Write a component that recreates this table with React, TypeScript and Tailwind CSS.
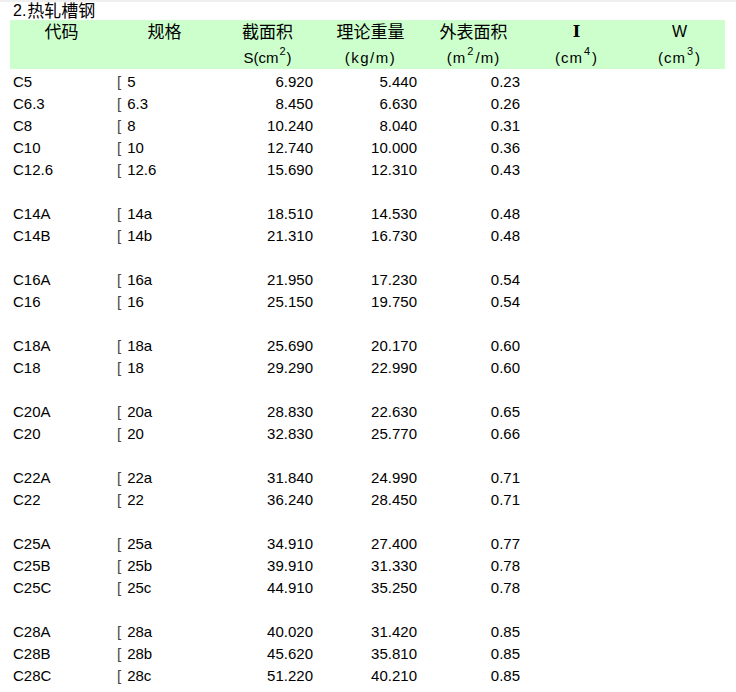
import React from "react";

type Row = [string, string, string, string, string] | null;

const rows: Row[] = [
  ["C5", "5", "6.920", "5.440", "0.23"],
  ["C6.3", "6.3", "8.450", "6.630", "0.26"],
  ["C8", "8", "10.240", "8.040", "0.31"],
  ["C10", "10", "12.740", "10.000", "0.36"],
  ["C12.6", "12.6", "15.690", "12.310", "0.43"],
  null,
  ["C14A", "14a", "18.510", "14.530", "0.48"],
  ["C14B", "14b", "21.310", "16.730", "0.48"],
  null,
  ["C16A", "16a", "21.950", "17.230", "0.54"],
  ["C16", "16", "25.150", "19.750", "0.54"],
  null,
  ["C18A", "18a", "25.690", "20.170", "0.60"],
  ["C18", "18", "29.290", "22.990", "0.60"],
  null,
  ["C20A", "20a", "28.830", "22.630", "0.65"],
  ["C20", "20", "32.830", "25.770", "0.66"],
  null,
  ["C22A", "22a", "31.840", "24.990", "0.71"],
  ["C22", "22", "36.240", "28.450", "0.71"],
  null,
  ["C25A", "25a", "34.910", "27.400", "0.77"],
  ["C25B", "25b", "39.910", "31.330", "0.78"],
  ["C25C", "25c", "44.910", "35.250", "0.78"],
  null,
  ["C28A", "28a", "40.020", "31.420", "0.85"],
  ["C28B", "28b", "45.620", "35.810", "0.85"],
  ["C28C", "28c", "51.220", "40.210", "0.85"],
];

const grid = "grid grid-cols-[103px_103px_103px_103px_103px_103px_97px]";

function Sup({ n }: { n: string }) {
  return <sup className="text-[11px] top-[-0.55em] mx-[1px]">{n}</sup>;
}

export default function App() {
  return (
    <div
      className="w-[736px] h-[692px] bg-white text-[15px] text-black border-t-2 border-[#f0f0f0]"
      style={{ fontFamily: '"Liberation Sans", "Noto Sans CJK JP", sans-serif' }}
    >
      <div className="pl-[10px]">
        <div className="h-[18px] flex items-center pl-[3px] leading-none">
          <span className="text-[16px]">2.</span>
          <span className="text-[17px] ml-[1px]">热轧槽钢</span>
        </div>
        <div className={`${grid} bg-[#ccffcc] w-[715px]`}>
          <div className="h-[24px] flex items-center justify-center text-[17px] leading-none">代码</div>
          <div className="h-[24px] flex items-center justify-center text-[17px] leading-none">规格</div>
          <div className="h-[24px] flex items-center justify-center text-[17px] leading-none">截面积</div>
          <div className="h-[24px] flex items-center justify-center text-[17px] leading-none">理论重量</div>
          <div className="h-[24px] flex items-center justify-center text-[17px] leading-none">外表面积</div>
          <div className="h-[24px] flex items-center justify-center leading-none">
            <span className="text-[16px] font-bold" style={{ fontFamily: '"DejaVu Serif", serif' }}>I</span>
          </div>
          <div className="h-[24px] flex items-center justify-center pl-[6px] leading-none text-[16px]">W</div>

          <div className="h-[25px]" />
          <div className="h-[25px]" />
          <div className="h-[25px] flex items-center justify-center leading-none pt-[2px]">
            S(cm<Sup n="2" />)
          </div>
          <div className="h-[25px] flex items-center justify-center leading-none pt-[2px] tracking-[1.5px]">
            (kg/m)
          </div>
          <div className="h-[25px] flex items-center justify-center leading-none pt-[2px] tracking-[1px]">
            (m<Sup n="2" />/m)
          </div>
          <div className="h-[25px] flex items-center justify-center leading-none pt-[2px] tracking-[1px]">
            (cm<Sup n="4" />)
          </div>
          <div className="h-[25px] flex items-center justify-center pl-[6px] leading-none pt-[2px] tracking-[1px]">
            (cm<Sup n="3" />)
          </div>
        </div>
        <div className="pt-[1px]">
          {rows.map((r, i) =>
            r ? (
              <div key={i} className={`${grid} h-[22px] items-center leading-none`}>
                <div className="pl-[3px]">{r[0]}</div>
                <div className="pl-[4px] flex items-center">
                  <span className="text-[#444] mr-[6px]">[</span>
                  <span>{r[1]}</span>
                </div>
                <div className="text-right pr-[6px]">{r[2]}</div>
                <div className="text-right pr-[5px]">{r[3]}</div>
                <div className="text-right pr-[5px]">{r[4]}</div>
                <div />
                <div />
              </div>
            ) : (
              <div key={i} className="h-[22px]" />
            )
          )}
        </div>
      </div>
    </div>
  );
}
